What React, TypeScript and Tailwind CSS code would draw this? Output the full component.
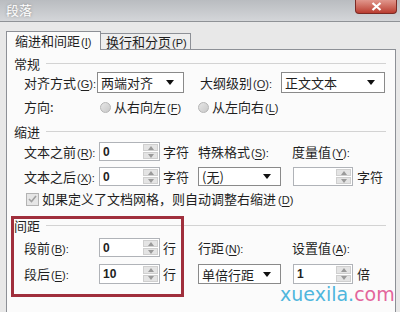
import React from "react";

const cjk = "font-['Noto_Sans_CJK_SC',sans-serif]";

function Acc({ text, k, colon = true }: { text: string; k: string; colon?: boolean }) {
  return (
    <span className="whitespace-nowrap">
      {text}
      <span className="ml-[1px] text-[11px] font-['Liberation_Sans',sans-serif]">
        (<span className="underline underline-offset-2">{k}</span>){colon ? ":" : ""}
      </span>
    </span>
  );
}

function Header({ text }: { text: string }) {
  return (
    <div className="flex items-center h-[14px] pl-[7px] pr-[9px]">
      <span className="leading-none">{text}</span>
      <div className="flex-1 ml-[6px] border-t border-[#d3d3d3]" />
    </div>
  );
}

function Dropdown({ value, className }: { value: string; className: string }) {
  return (
    <div
      className={
        "flex items-center justify-between h-full shrink-0 border border-[#8a8a8a] bg-white pl-[3px] pr-[9px] " +
        className
      }
    >
      <span className="leading-none">{value}</span>
      <svg width="8" height="5" viewBox="0 0 8 5">
        <path d="M0 0 L8 0 L4 5 Z" fill="#111" />
      </svg>
    </div>
  );
}

function Spinner({ value, className }: { value: string; className: string }) {
  return (
    <div className={"flex h-full shrink-0 border border-[#b0b3b8] bg-white " + className}>
      <div className="flex-1 flex items-center pl-[3px] text-[12px] font-bold font-['Liberation_Sans',sans-serif] text-[#222]">
        {value}
      </div>
      <div className="w-[17px] flex flex-col gap-[1px] p-[1px] bg-white">
        <div className="flex-1 flex items-center justify-center bg-[#e4e4e4] border border-[#cfcfcf]">
          <svg width="6" height="4" viewBox="0 0 6 4">
            <path d="M0 4 L6 4 L3 0 Z" fill="#9a9a9a" />
          </svg>
        </div>
        <div className="flex-1 flex items-center justify-center bg-[#e4e4e4] border border-[#cfcfcf]">
          <svg width="6" height="4" viewBox="0 0 6 4">
            <path d="M0 0 L6 0 L3 4 Z" fill="#9a9a9a" />
          </svg>
        </div>
      </div>
    </div>
  );
}

function Radio() {
  return (
    <span className="w-[11px] h-[11px] rounded-full border border-[#b5b5b5] bg-gradient-to-br from-[#e6e6e6] to-[#c9c9c9] shrink-0" />
  );
}

export default function App() {
  return (
    <div
      className={
        "relative w-[400px] h-[312px] overflow-hidden flex flex-col bg-[#e8e8e8] text-[13px] text-[#1f1f1f] " +
        cjk
      }
    >
      {/* title bar */}
      <div className="flex justify-between h-[22px] shrink-0 bg-gradient-to-b from-[#b9bcc0] to-[#d4d6d9] border-b border-[#8f9296]">
        <span className="pl-[6px] pt-[3px] text-white leading-none [text-shadow:0_0_3px_#8a8a8a]">段落</span>
        <div className="mr-[3px] w-[42px] h-[14px] flex items-center justify-center rounded-b-[4px] border border-t-0 border-[#7c2a24] bg-gradient-to-b from-[#e0968c] to-[#b93b30]">
          <svg width="11" height="9" viewBox="0 0 11 9">
            <path d="M1.5 1 L9.5 8 M9.5 1 L1.5 8" stroke="#fff" strokeWidth="2.2" />
          </svg>
        </div>
      </div>

      {/* tabs */}
      <div className="flex items-end pl-[6px] pt-[9px] shrink-0">
        <div className="relative z-[1] -mb-px w-[95px] h-[19px] flex items-center pl-[8px] border border-b-0 border-[#8d9096] bg-[#fbfbfb]">
          <Acc text="缩进和间距" k="I" colon={false} />
        </div>
        <div className="w-[90px] h-[16px] flex items-center pl-[5px] border border-l-0 border-b-0 border-[#8d9096] bg-[#eeeeee]">
          <Acc text="换行和分页" k="P" colon={false} />
        </div>
      </div>

      {/* panel */}
      <div className="ml-[6px] w-[390px] h-[280px] shrink-0 border border-[#8d9096] bg-[#fbfbfb] flex flex-col pt-[6px]">
        <Header text="常规" />

        <div className="flex items-center h-[21px] mt-[2px] pl-[17px]">
          <div className="w-[73px] shrink-0">
            <Acc text="对齐方式" k="G" />
          </div>
          <Dropdown value="两端对齐" className="w-[87px]" />
          <div className="w-[16px] shrink-0" />
          <div className="w-[81px] shrink-0">
            <Acc text="大纲级别" k="O" />
          </div>
          <Dropdown value="正文文本" className="w-[104px]" />
        </div>

        <div className="flex items-center h-[16px] mt-[6px] pl-[17px]">
          <div className="w-[76px] shrink-0">方向:</div>
          <div className="w-[98px] shrink-0 flex items-center gap-[3px]">
            <Radio />
            <Acc text="从右向左" k="F" colon={false} />
          </div>
          <div className="flex items-center gap-[3px]">
            <Radio />
            <Acc text="从左向右" k="L" colon={false} />
          </div>
        </div>

        <div className="mt-[9px]">
          <Header text="缩进" />
        </div>

        <div className="flex items-center h-[19px] mt-[4px] pl-[17px]">
          <div className="w-[75px] shrink-0">
            <Acc text="文本之前" k="R" />
          </div>
          <Spinner value="0" className="w-[61px]" />
          <div className="w-[38px] shrink-0 pl-[3px]">字符</div>
          <div className="w-[94px] shrink-0">
            <Acc text="特殊格式" k="S" />
          </div>
          <Acc text="度量值" k="Y" />
        </div>

        <div className="flex items-center h-[19px] mt-[6px] pl-[17px]">
          <div className="w-[75px] shrink-0">
            <Acc text="文本之后" k="X" />
          </div>
          <Spinner value="0" className="w-[61px]" />
          <div className="w-[38px] shrink-0 pl-[3px]">字符</div>
          <Dropdown value="(无)" className="w-[83px]" />
          <div className="w-[12px] shrink-0" />
          <Spinner value="" className="w-[60px]" />
          <div className="pl-[4px]">字符</div>
        </div>

        <div className="flex items-center h-[14px] mt-[6px] pl-[19px]">
          <div className="w-[13px] h-[13px] shrink-0 flex items-center justify-center border border-[#b3b3b3] bg-[#e6e6e6]">
            <svg width="9" height="8" viewBox="0 0 9 8">
              <path d="M1 4 L3.5 6.5 L8 1" stroke="#a0a0a0" strokeWidth="1.6" fill="none" />
            </svg>
          </div>
          <span className="ml-[3px] whitespace-nowrap">
            如果定义了文档网格，则自动调整右缩进
            <span className="ml-[2px] text-[11px] font-['Liberation_Sans',sans-serif]">
              (<span className="underline underline-offset-2">D</span>)
            </span>
          </span>
        </div>

        <div className="mt-[12px]">
          <Header text="间距" />
        </div>

        <div className="flex items-center h-[19px] mt-[6px] pl-[17px]">
          <div className="w-[75px] shrink-0">
            <Acc text="段前" k="B" />
          </div>
          <Spinner value="0" className="w-[61px]" />
          <div className="w-[38px] shrink-0 pl-[3px]">行</div>
          <div className="w-[94px] shrink-0">
            <Acc text="行距" k="N" />
          </div>
          <Acc text="设置值" k="A" />
        </div>

        <div className="flex items-center h-[20px] mt-[7px] pl-[17px]">
          <div className="w-[75px] shrink-0">
            <Acc text="段后" k="E" />
          </div>
          <Spinner value="10" className="w-[61px]" />
          <div className="w-[38px] shrink-0 pl-[3px]">行</div>
          <Dropdown value="单倍行距" className="w-[83px]" />
          <div className="w-[12px] shrink-0" />
          <Spinner value="1" className="w-[60px]" />
          <div className="pl-[4px]">倍</div>
        </div>
      </div>

      {/* annotation box */}
      <div className="absolute left-[11px] top-[216px] w-[173px] h-[81px] border-[3px] border-[#a02f3c]" />

      {/* watermark */}
      <div className="absolute left-[280px] top-[285px] text-[19px] leading-none font-['DejaVu_Sans',sans-serif]">
        <span className="text-[#4fb6dd]">xuexila.</span>
        <span className="text-[#e3659c]">com</span>
      </div>
    </div>
  );
}
